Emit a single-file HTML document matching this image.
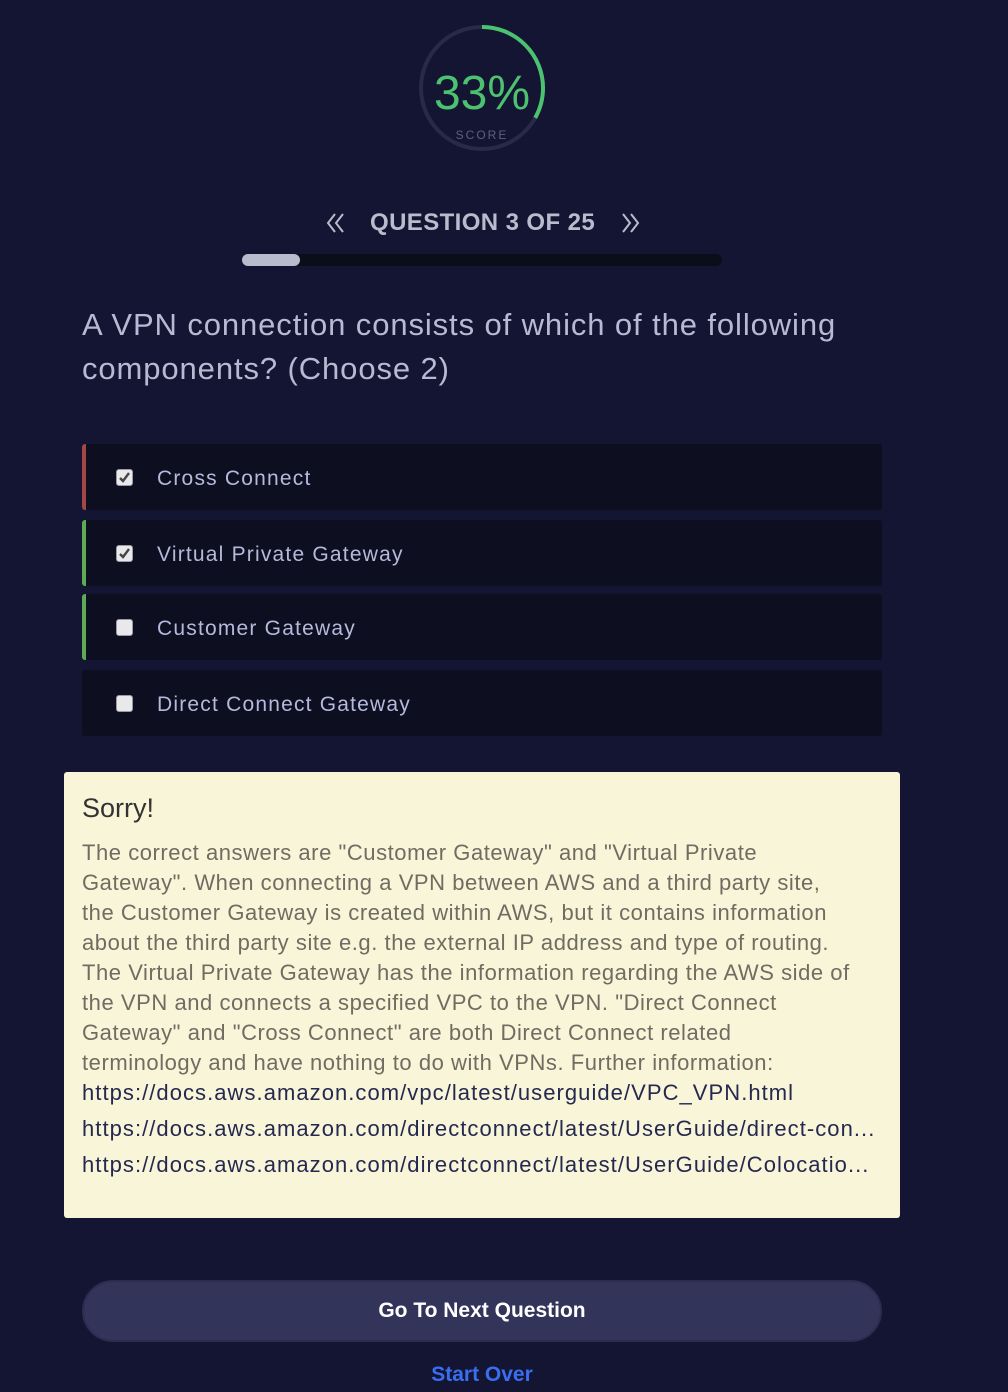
<!DOCTYPE html>
<html><head><meta charset="utf-8"><style>
*{margin:0;padding:0;box-sizing:border-box}
body{width:1008px;height:1392px;background:#131533;font-family:"Liberation Sans",sans-serif;position:relative;overflow:hidden}
.a{position:absolute;white-space:nowrap}
.opt{position:absolute;left:82px;width:800px;height:66px;background:#0d0e1f;border-radius:3px}
.opt .bar{position:absolute;left:0;top:0;width:4px;height:66px;border-radius:3px 0 0 3px}
.cb{position:absolute;left:34px;top:25px;width:17px;height:17px;background:#e9e9ec;border:1px solid #9a9aa8;border-radius:3px}
.cb svg{position:absolute;left:1px;top:1px}
.opt span{position:absolute;left:75px;top:23px;font-size:21px;color:#b6b9dc;letter-spacing:1.2px}
.fb{font-size:22px;color:#6f6d62;line-height:30px;letter-spacing:.55px}
.lk{font-size:22px;color:#25284f;letter-spacing:1.05px}
</style></head><body>
<svg class="a" style="left:416px;top:22px" width="132" height="132" viewBox="0 0 132 132">
<circle cx="66" cy="66" r="61" fill="none" stroke="#292a48" stroke-width="4"/>
<circle cx="66" cy="66" r="61" fill="none" stroke="#4cc270" stroke-width="4" stroke-dasharray="127 400" transform="rotate(-90 66 66)"/>
</svg>
<div class="a" style="left:416px;width:132px;text-align:center;top:66px;font-size:48px;color:#4cc270;line-height:56px">33%</div>
<div class="a" style="left:416px;width:132px;text-align:center;top:128px;font-size:12px;letter-spacing:2px;color:#5e607e">SCORE</div>
<svg class="a" style="left:326px;top:212px" width="20" height="22" viewBox="0 0 20 22"><path d="M9 2L2 11l7 9M17 2l-7 9 7 9" stroke="#b9bccc" stroke-width="2" fill="none"/></svg>
<div class="a" style="left:370px;top:209px;font-size:24px;font-weight:bold;color:#b9bccc;letter-spacing:.4px">QUESTION 3 OF 25</div>
<svg class="a" style="left:620px;top:212px" width="20" height="22" viewBox="0 0 20 22"><path d="M3 2l7 9-7 9M11 2l7 9-7 9" stroke="#b9bccc" stroke-width="2" fill="none"/></svg>
<div class="a" style="left:242px;top:254px;width:480px;height:12px;background:#0c0d1a;border-radius:6px"></div>
<div class="a" style="left:242px;top:254px;width:58px;height:12px;background:#b9bccc;border-radius:6px"></div>
<div class="a" style="left:82px;top:303px;font-size:31px;line-height:44px;color:#b8bad2;letter-spacing:.9px">A VPN connection consists of which of the following<br>components? (Choose 2)</div>
<div class="opt" style="top:444px"><div class="bar" style="background:#a54646"></div><div class="cb"><svg width="13" height="13"><path d="M2 7l3 3 6-8" stroke="#444" stroke-width="2.4" fill="none"/></svg></div><span>Cross Connect</span></div>
<div class="opt" style="top:520px"><div class="bar" style="background:#5faa55"></div><div class="cb"><svg width="13" height="13"><path d="M2 7l3 3 6-8" stroke="#444" stroke-width="2.4" fill="none"/></svg></div><span>Virtual Private Gateway</span></div>
<div class="opt" style="top:594px"><div class="bar" style="background:#5faa55"></div><div class="cb"></div><span>Customer Gateway</span></div>
<div class="opt" style="top:670px"><div class="cb"></div><span>Direct Connect Gateway</span></div>
<div class="a" style="left:64px;top:772px;width:836px;height:446px;background:#f8f5d9;border-radius:3px"></div>
<div class="a" style="left:82px;top:793px;font-size:27px;color:#333">Sorry!</div>
<div class="a fb" style="left:82px;top:838px">The correct answers are "Customer Gateway" and "Virtual Private<br>Gateway". When connecting a VPN between AWS and a third party site,<br>the Customer Gateway is created within AWS, but it contains information<br>about the third party site e.g. the external IP address and type of routing.<br>The Virtual Private Gateway has the information regarding the AWS side of<br>the VPN and connects a specified VPC to the VPN. "Direct Connect<br>Gateway" and "Cross Connect" are both Direct Connect related<br>terminology and have nothing to do with VPNs. Further information:</div>
<div class="a lk" style="left:82px;top:1080px">https://docs.aws.amazon.com/vpc/latest/userguide/VPC_VPN.html</div>
<div class="a lk" style="left:82px;top:1116px">https://docs.aws.amazon.com/directconnect/latest/UserGuide/direct-con...</div>
<div class="a lk" style="left:82px;top:1152px">https://docs.aws.amazon.com/directconnect/latest/UserGuide/Colocatio...</div>
<div class="a" style="left:82px;top:1280px;width:800px;height:62px;background:#33345a;border:2px solid #2b2c4e;border-radius:31px;text-align:center;line-height:58px;font-size:21px;font-weight:bold;color:#fff">Go To Next Question</div>
<div class="a" style="left:0;width:964px;text-align:center;top:1363px;font-size:21px;font-weight:bold;color:#3a6df0">Start Over</div>
</body></html>
